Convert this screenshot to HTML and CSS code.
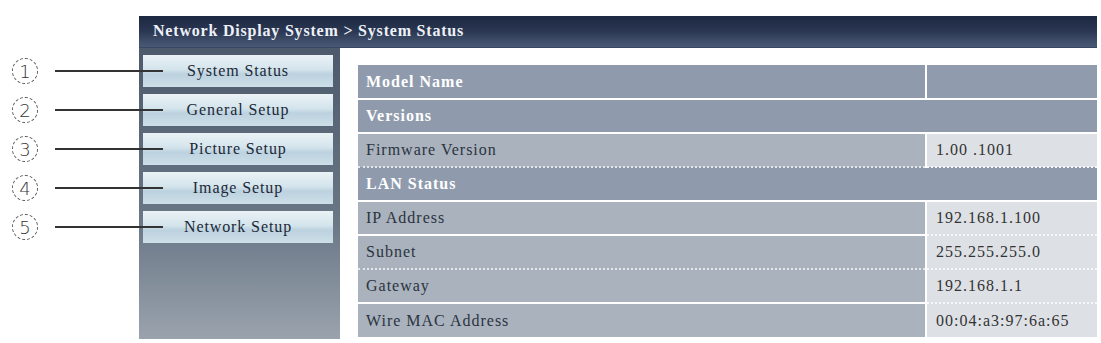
FILE: index.html
```html
<!DOCTYPE html>
<html lang="en">
<head>
  <meta charset="UTF-8" />
  <title>Network Display System - System Status</title>
  <link rel="stylesheet" href="styles.css">
</head>
<body>
  <div class="page">
    <div class="callouts">
      <div class="callout"><span class="num">1</span><span class="line"></span></div>
      <div class="callout"><span class="num">2</span><span class="line"></span></div>
      <div class="callout"><span class="num">3</span><span class="line"></span></div>
      <div class="callout"><span class="num">4</span><span class="line"></span></div>
      <div class="callout"><span class="num">5</span><span class="line"></span></div>
    </div>

    <div class="app">
      <div class="topbar">Network Display System &gt; System Status</div>
      <div class="main">
        <div class="sidebar">
          <div class="nav-btn">System Status</div>
          <div class="nav-btn">General Setup</div>
          <div class="nav-btn">Picture Setup</div>
          <div class="nav-btn">Image Setup</div>
          <div class="nav-btn">Network Setup</div>
        </div>
        <div class="content">
          <table class="status">
            <tr class="head">
              <td>Model Name</td>
              <td class="val"></td>
            </tr>
            <tr class="head">
              <td colspan="2">Versions</td>
            </tr>
            <tr>
              <td class="dotted">Firmware Version</td>
              <td class="val">1.00 .1001</td>
            </tr>
            <tr class="head">
              <td colspan="2">LAN Status</td>
            </tr>
            <tr>
              <td>IP Address</td>
              <td class="val">192.168.1.100</td>
            </tr>
            <tr>
              <td class="dotted">Subnet</td>
              <td class="val">255.255.255.0</td>
            </tr>
            <tr>
              <td>Gateway</td>
              <td class="val">192.168.1.1</td>
            </tr>
            <tr class="last">
              <td>Wire MAC Address</td>
              <td class="val">00:04:a3:97:6a:65</td>
            </tr>
          </table>
        </div>
      </div>
    </div>
  </div>
</body>
</html>
```

FILE: styles.css
```css
* {
  box-sizing: border-box;
}
html, body {
  margin: 0;
  padding: 0;
  background: #fff;
  overflow: hidden;
}
body, table, td, div {
  font-family: "Liberation Serif", "DejaVu Serif", "Times New Roman", serif;
}
.page {
  display: flex;
  padding-top: 16px;
}
.callouts {
  width: 139px;
  flex-shrink: 0;
  display: flex;
  flex-direction: column;
  padding-top: 39px;
  padding-left: 12px;
}
.callout {
  height: 32px;
  margin-bottom: 7px;
  display: flex;
  align-items: center;
  position: relative;
  z-index: 2;
}
.num {
  width: 26px;
  height: 26px;
  border: 1px dashed #555;
  border-radius: 50%;
  display: flex;
  align-items: center;
  justify-content: center;
  font-family: "DejaVu Sans", sans-serif;
  font-size: 18px;
  font-weight: 300;
  color: #333;
  flex-shrink: 0;
}
.line {
  width: 108px;
  height: 1.5px;
  background: #333;
  margin-left: 17px;
  flex-shrink: 0;
}
.app {
  width: 958px;
  display: flex;
  flex-direction: column;
}
.topbar {
  height: 32px;
  padding: 6px 0 0 14px;
  background: linear-gradient(#1c2740, #2b3853 50%, #4a5a76);
  border-bottom: 1px solid #3a4660;
  color: #eef1f7;
  font-weight: bold;
  font-size: 16px;
  letter-spacing: 0.8px;
}
.main {
  display: flex;
  height: 291px;
}
.sidebar {
  width: 201px;
  padding: 7px 7px 0 4px;
  background: linear-gradient(#4d5a6b, #6a7787 60%, #9aa3ad);
}
.nav-btn {
  height: 32px;
  margin-bottom: 7px;
  display: flex;
  align-items: center;
  justify-content: center;
  background: linear-gradient(#eaf2f6, #d4e4ec 45%, #bcd2df 60%, #cddfe8);
  color: #1c2836;
  font-size: 16px;
  letter-spacing: 0.9px;
}
.content {
  flex: 1;
  background: #fff;
  padding: 17px 0 0 18px;
}
.status {
  width: 739px;
  border-collapse: collapse;
  font-size: 16px;
  letter-spacing: 1px;
}
.status td {
  height: 34px;
  padding: 0 0 0 8px;
  background: #a9b2bd;
  color: #2b3440;
  border-bottom: 2px solid #fff;
}
.status td.dotted {
  border-bottom: 2px dotted #e4e7ea;
}
.status .head td {
  background: #8f9bad;
  color: #fff;
  font-weight: bold;
}
.status td.val {
  width: 171px;
  padding-left: 9px;
  background: #dde1e5;
  border-left: 2px solid #fff;
  border-bottom: 2px dotted #f7f8f9;
  color: #333;
}
.status .head td.val {
  background: #909cad;
  border-bottom: 2px solid #fff;
}
.status .last td {
  border-bottom: none;
}
```
